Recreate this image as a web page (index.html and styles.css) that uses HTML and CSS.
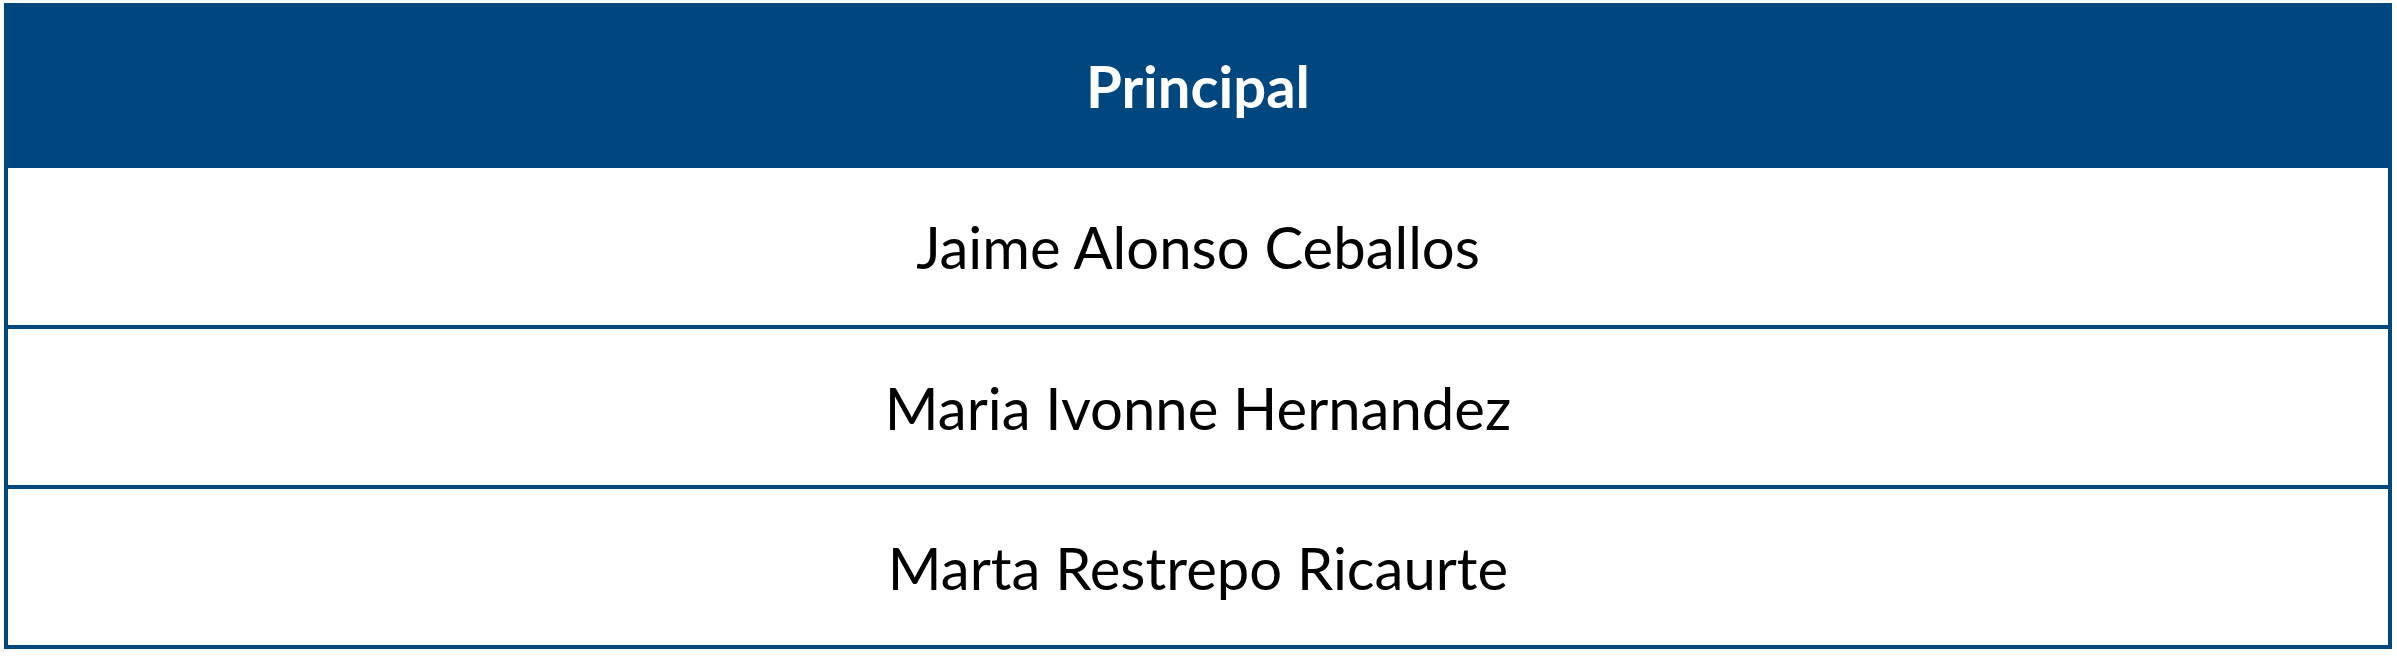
FILE: index.html
```html
<!DOCTYPE html>
<html>
<head>
<meta charset="utf-8">
<link rel="stylesheet" href="styles.css">
</head>
<body>
<div class="table">
  <div class="head">Principal</div>
  <div class="body">
    <div class="row">Jaime Alonso Ceballos</div>
    <div class="row">Maria Ivonne Hernandez</div>
    <div class="row">Marta Restrepo Ricaurte</div>
  </div>
</div>
</body>
</html>
```
FILE: styles.css
```css
html, body { background: #ffffff; }
body {
  margin: 3px 5px 0 4px;
  font-family: Lato, "Open Sans", sans-serif;
  color: #000;
}
.table {
  width: 2388px;
  display: flex;
  flex-direction: column;
}
.head {
  height: 165px;
  background: #00467f;
  color: #fff;
  font-weight: 700;
  font-size: 58px;
  display: flex;
  align-items: center;
  justify-content: center;
}
.body {
  border: 4px solid #00467f;
  border-top: 0;
  display: flex;
  flex-direction: column;
}
.row {
  height: 157px;
  display: flex;
  align-items: center;
  justify-content: center;
  font-size: 58px;
}
.row + .row {
  border-top: 4px solid #00467f;
  height: 156px;
}
```
